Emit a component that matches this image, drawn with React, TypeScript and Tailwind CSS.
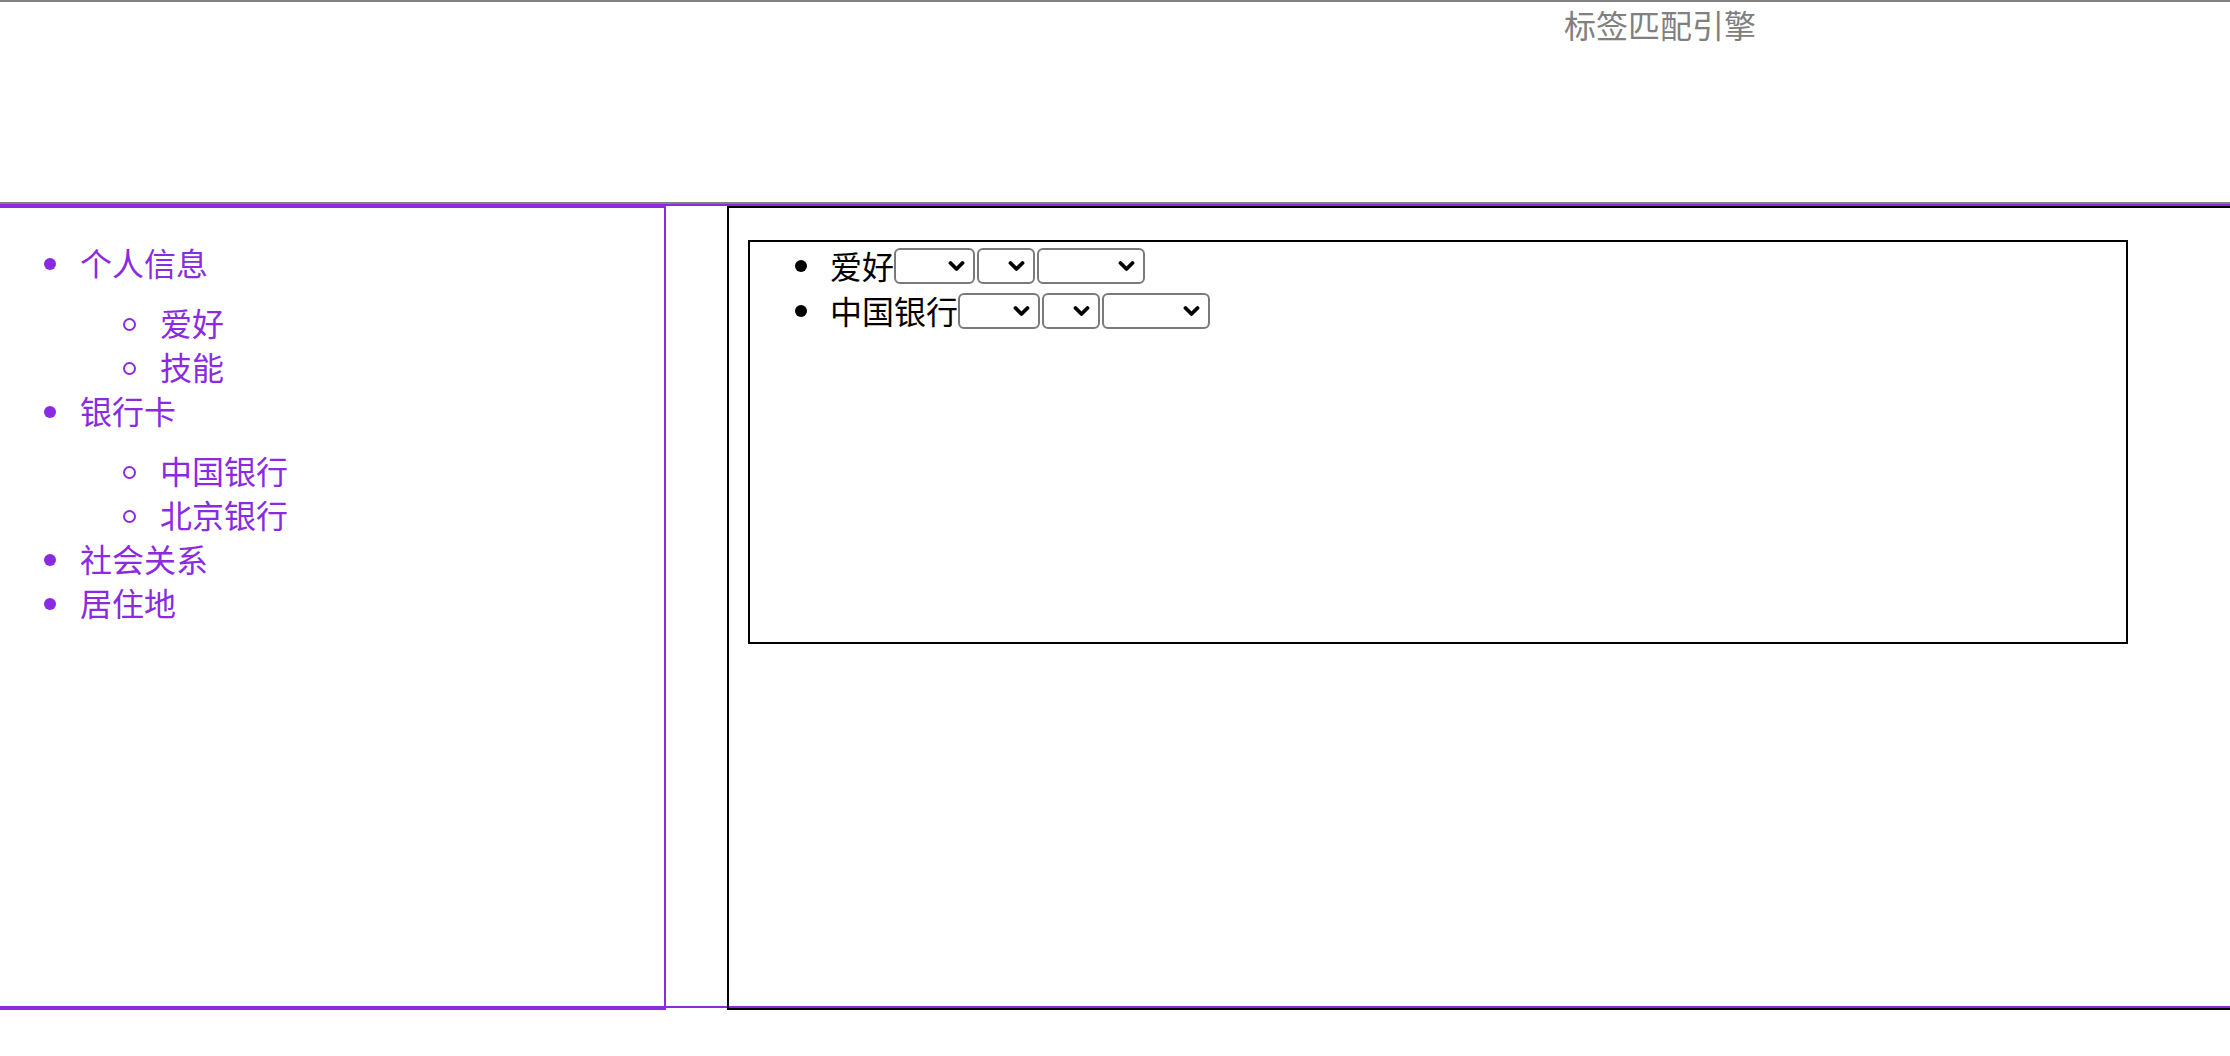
import React from "react";

const FONT = { fontFamily: '"Noto Sans CJK SC", "Noto Sans", sans-serif' };

// empty dropdown, drawn like the native mac control at 2x
function Picker({ width, first }: { width: string; first: boolean }) {
  return (
    <span className={`relative mt-[3px] inline-block h-[36px] shrink-0 ${first ? "ml-0" : "ml-[2px]"} ${width}`}>
      <select className="block h-full w-full appearance-none rounded-[6px] border-2 border-[#7a7a7a] bg-white" />
      <svg
        className="pointer-events-none absolute right-[10px] top-[12px]"
        width="17"
        height="12"
        viewBox="0 0 17 12"
      >
        <polyline points="2.5,3 8.5,9 14.5,3" fill="none" stroke="#000" strokeWidth="3.8" strokeLinecap="round" strokeLinejoin="round" />
      </svg>
    </span>
  );
}

function Dot({ className }: { className: string }) {
  return <span className={`inline-block shrink-0 rounded-full ${className}`} />;
}

const menu = [
  { label: "个人信息", children: ["爱好", "技能"] },
  { label: "银行卡", children: ["中国银行", "北京银行"] },
  { label: "社会关系" },
  { label: "居住地" },
];

const rules = [
  { label: "爱好", widths: ["w-[81px]", "w-[58px]", "w-[108px]"] },
  { label: "中国银行", widths: ["w-[82px]", "w-[58px]", "w-[108px]"] },
];

export default function App() {
  return (
    <div className="min-h-[1056px] w-full overflow-hidden bg-white text-[32px] leading-[44px]" style={FONT}>
      {/* header */}
      <header className="h-[204px] border-t-2 border-b-2 border-[#808080]">
        <h1 className="ml-[1564px] text-[32px] font-normal leading-[44px] text-[#808080]">标签匹配引擎</h1>
      </header>

      <div className="flex h-[804px] items-start border-t-2 border-b-2 border-[#8a2be2]">
        {/* tag tree */}
        <nav className="h-[804px] w-[666px] shrink-0 border-t-2 border-r-2 border-b-2 border-[#8a2be2] text-[#8a2be2]">
          <ul className="mt-[32px] pl-[80px]">
            {menu.map((item) => (
              <li key={item.label}>
                <div className="flex items-center">
                  <Dot className="-ml-[36px] mr-[24px] mt-[4px] h-[12px] w-[12px] bg-[#8a2be2]" />
                  {item.label}
                </div>
                {item.children && (
                  <ul className="mt-[16px] pl-[80px]">
                    {item.children.map((c) => (
                      <li key={c} className="flex items-center">
                        <Dot className="-ml-[37px] mr-[24px] mt-[4px] h-[13px] w-[13px] border-2 border-[#8a2be2]" />
                        {c}
                      </li>
                    ))}
                  </ul>
                )}
              </li>
            ))}
          </ul>
        </nav>

        {/* rule editor */}
        <section className="ml-[61px] h-[804px] w-[1563px] shrink-0 border-2 border-black">
          <ul className="ml-[19px] mt-[32px] h-[404px] w-[1380px] border-2 border-black pl-[80px] text-black">
            {rules.map((r) => (
              <li key={r.label} className="flex h-[45px] items-center">
                <Dot className="-ml-[35px] mr-[23px] mt-[3px] h-[12px] w-[12px] bg-black" />
                <span>{r.label}</span>
                {r.widths.map((w, i) => (
                  <Picker key={i} width={w} first={i === 0} />
                ))}
              </li>
            ))}
          </ul>
        </section>
      </div>
    </div>
  );
}
